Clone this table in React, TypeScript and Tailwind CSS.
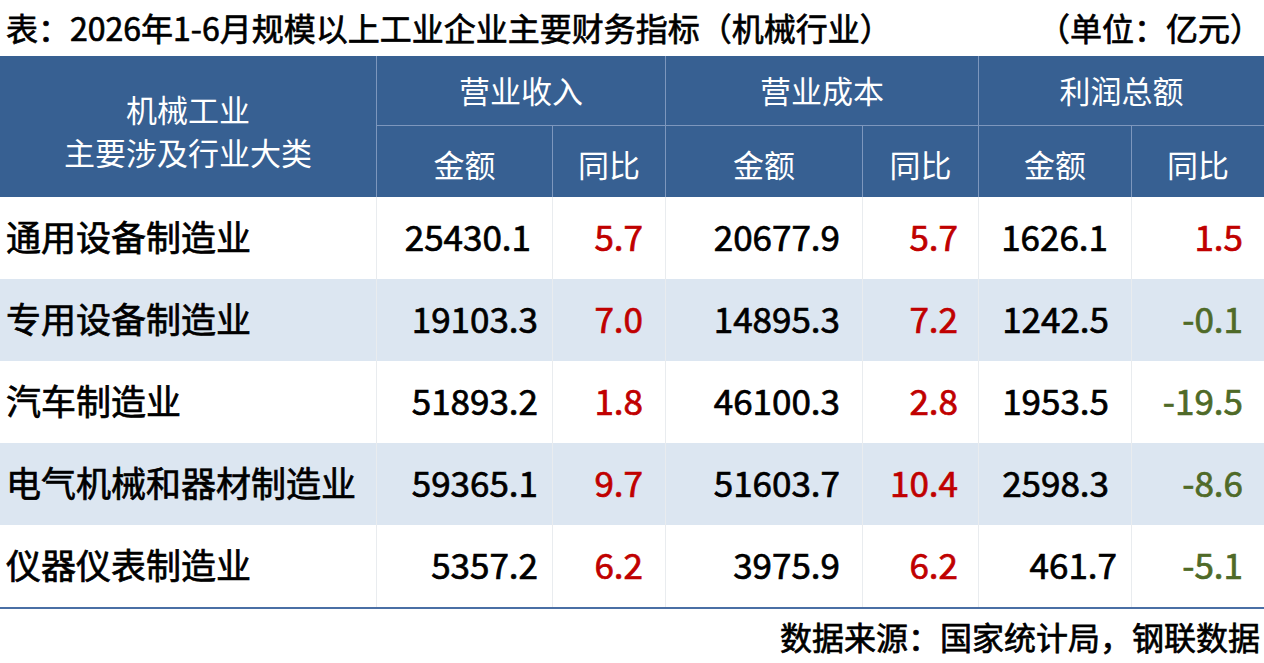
import React from "react";

type Row = {
  name: string;
  cells: { v: string; tone?: "red" | "green"; pr: string }[];
  shaded?: boolean;
};

const rows: Row[] = [
  {
    name: "通用设备制造业",
    cells: [
      { v: "25430.1", pr: "pr-[21px]" },
      { v: "5.7", tone: "red", pr: "pr-[22px]" },
      { v: "20677.9", pr: "pr-[22px]" },
      { v: "5.7", tone: "red", pr: "pr-[20px]" },
      { v: "1626.1", pr: "pr-[23px]" },
      { v: "1.5", tone: "red", pr: "pr-[21px]" },
    ],
  },
  {
    name: "专用设备制造业",
    shaded: true,
    cells: [
      { v: "19103.3", pr: "pr-[14px]" },
      { v: "7.0", tone: "red", pr: "pr-[22px]" },
      { v: "14895.3", pr: "pr-[22px]" },
      { v: "7.2", tone: "red", pr: "pr-[20px]" },
      { v: "1242.5", pr: "pr-[22px]" },
      { v: "-0.1", tone: "green", pr: "pr-[21px]" },
    ],
  },
  {
    name: "汽车制造业",
    cells: [
      { v: "51893.2", pr: "pr-[14px]" },
      { v: "1.8", tone: "red", pr: "pr-[22px]" },
      { v: "46100.3", pr: "pr-[22px]" },
      { v: "2.8", tone: "red", pr: "pr-[20px]" },
      { v: "1953.5", pr: "pr-[22px]" },
      { v: "-19.5", tone: "green", pr: "pr-[21px]" },
    ],
  },
  {
    name: "电气机械和器材制造业",
    shaded: true,
    cells: [
      { v: "59365.1", pr: "pr-[14px]" },
      { v: "9.7", tone: "red", pr: "pr-[22px]" },
      { v: "51603.7", pr: "pr-[22px]" },
      { v: "10.4", tone: "red", pr: "pr-[20px]" },
      { v: "2598.3", pr: "pr-[22px]" },
      { v: "-8.6", tone: "green", pr: "pr-[21px]" },
    ],
  },
  {
    name: "仪器仪表制造业",
    cells: [
      { v: "5357.2", pr: "pr-[14px]" },
      { v: "6.2", tone: "red", pr: "pr-[22px]" },
      { v: "3975.9", pr: "pr-[22px]" },
      { v: "6.2", tone: "red", pr: "pr-[20px]" },
      { v: "461.7", pr: "pr-[14px]" },
      { v: "-5.1", tone: "green", pr: "pr-[21px]" },
    ],
  },
];

const toneClass = (tone?: "red" | "green") =>
  tone === "red" ? "text-[#c00000]" : tone === "green" ? "text-[#4f6a28]" : "text-black";

export default function App() {
  return (
    <div className="w-[1264px] h-[663px] bg-white overflow-hidden font-['Noto_Sans_CJK_SC','Noto_Sans',sans-serif]">
      {/* title */}
      <div className="h-[56px] flex items-center justify-between pl-[6px] pr-[2px] pb-[2px] text-[32px] font-normal [-webkit-text-stroke:0.7px_black] text-black leading-none">
        <span>表：2026年1-6月规模以上工业企业主要财务指标（机械行业）</span>
        <span>（单位：亿元）</span>
      </div>

      {/* table */}
      <div className="grid grid-cols-[376px_176px_113px_197px_116px_153px_133px] border-b-2 border-[#4a6fa5]">
        {/* header */}
        <div className="row-span-2 h-[141px] bg-[#376092] text-white text-[31px] flex flex-col items-center justify-center pt-[6px] leading-[43px]">
          <span>机械工业</span>
          <span>主要涉及行业大类</span>
        </div>
        {["营业收入", "营业成本", "利润总额"].map((h) => (
          <div
            key={h}
            className="col-span-2 h-[70px] bg-[#376092] border-l border-b border-[#7d97bd] text-white text-[31px] flex items-center justify-center"
          >
            {h}
          </div>
        ))}
        {["金额", "同比", "金额", "同比", "金额", "同比"].map((h, i) => (
          <div
            key={i}
            className="h-[71px] bg-[#376092] border-l border-[#7d97bd] text-white text-[31px] flex items-center justify-center pt-[6px]"
          >
            {h}
          </div>
        ))}

        {/* body */}
        {rows.map((r) => (
          <React.Fragment key={r.name}>
            <div
              className={`h-[82px] flex items-center pl-[6px] pb-[4px] text-[35px] font-normal [-webkit-text-stroke:0.7px_black] text-black ${
                r.shaded ? "bg-[#dce6f1]" : "bg-white"
              }`}
            >
              {r.name}
            </div>
            {r.cells.map((c, i) => (
              <div
                key={i}
                className={`h-[82px] flex items-center justify-end pb-[4px] border-l border-[#e9ecef] text-[35px] font-normal [-webkit-text-stroke:0.7px_currentColor] ${c.pr} ${toneClass(
                  c.tone
                )} ${r.shaded ? "bg-[#dce6f1]" : "bg-white"}`}
              >
                {c.v}
              </div>
            ))}
          </React.Fragment>
        ))}
      </div>

      {/* footer */}
      <div className="h-[54px] flex items-center justify-end pr-[4px] text-[32px] font-normal [-webkit-text-stroke:0.7px_black] text-black leading-none">
        数据来源：国家统计局，钢联数据
      </div>
    </div>
  );
}
